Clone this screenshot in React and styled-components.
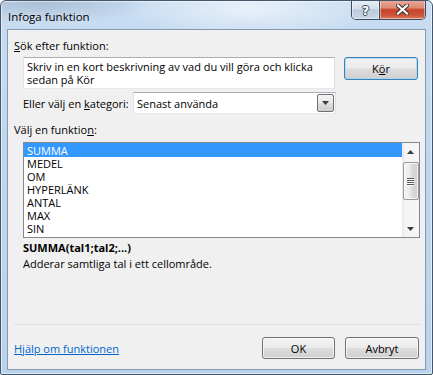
import React from 'react';
import styled, { createGlobalStyle } from 'styled-components';

const FONT = `"Open Sans", "Noto Sans", "Liberation Sans", sans-serif`;

const Global = createGlobalStyle`
  html, body { margin: 0; padding: 0; }
  body { background: #ffffff; font-family: ${FONT}; }
  *, *::before, *::after { box-sizing: border-box; }
`;

const Window = styled.div`
  width: 433px;
  height: 375px;
  border: 1px solid #44566b;
  border-radius: 6px 6px 2px 2px;
  background:
    radial-gradient(ellipse 170px 38px at 250px 8px, rgba(255,255,255,0.6), rgba(255,255,255,0) 75%),
    radial-gradient(ellipse 140px 30px at 40px 0px, rgba(110,130,155,0.35), rgba(110,130,155,0) 80%),
    linear-gradient(180deg, #c8ddf2 0%, #bed6ee 40%, #bad3ec 100%);
  box-shadow: inset 0 0 0 1px rgba(255,255,255,0.55);
  display: flex;
  flex-direction: column;
  padding: 0 6px 4px 6px;
  overflow: hidden;
  font-family: ${FONT};
  font-size: 11px;
  color: #000;
`;

const TitleBar = styled.div`
  height: 28px;
  display: flex;
  align-items: flex-start;
  justify-content: space-between;
`;

const Title = styled.div`
  align-self: center;
  margin-top: 2px;
  padding-left: 1px;
  font-size: 11.5px;
  color: #000;
  text-shadow: 0 0 8px rgba(255,255,255,0.9);
`;

const CaptionButtons = styled.div`
  margin-top: -1px;
  display: flex;
  height: 20px;
  border: 1px solid #3c4c60;
  border-top: none;
  border-radius: 0 0 5px 5px;
  overflow: hidden;
`;

const CaptionButton = styled.div`
  width: ${p => p.$w}px;
  height: 100%;
  display: flex;
  align-items: center;
  justify-content: center;
  background: ${p => p.$close
    ? 'linear-gradient(180deg, #e9ab9d 0%, #dd8b77 40%, #c7432b 52%, #cc5438 80%, #dc7a5c 100%)'
    : 'linear-gradient(180deg, #e9f0f7 0%, #d4dfeb 45%, #bccbdc 52%, #c9d6e5 100%)'};
  box-shadow: inset 0 0 0 1px rgba(255,255,255,0.45);
  & + & { border-left: 1px solid #3c4c60; }
`;

const HelpGlyph = styled.span`
  font-family: "DejaVu Sans", ${FONT};
  font-weight: bold;
  font-size: 13px;
  line-height: 1;
  color: #fff;
  margin-top: 1px;
  text-shadow: -1px 0 #3a4659, 1px 0 #3a4659, 0 -1px #3a4659, 0 1px #3a4659;
`;

const Client = styled.div`
  flex: 1;
  border: 1px solid #8799ae;
  background: #f0f0f0;
  display: flex;
  flex-direction: column;
  padding: 0 6px 10px 6px;
`;

const Label = styled.div`
  margin-top: ${p => p.$top}px;
  padding-left: ${p => p.$indent || 0}px;
  line-height: 15px;
  height: 15px;
  white-space: nowrap;
`;

const Row = styled.div`
  margin-top: ${p => p.$top}px;
  padding-left: 9px;
  display: flex;
  align-items: ${p => p.$align || 'flex-start'};
`;

const TextBox = styled.div`
  width: 312px;
  height: 32px;
  border: 1px solid #abadb3;
  border-color: #abadb3 #dbdfe6 #e3e9ef #e2e3ea;
  background: #fff;
  padding: 2px 3px;
  line-height: 13px;
`;

const Button = styled.div`
  width: ${p => p.$w}px;
  height: ${p => p.$h || 22}px;
  margin-left: ${p => p.$ml || 0}px;
  border: 1px solid ${p => (p.$default ? '#3c7fb1' : '#707070')};
  border-radius: 3px;
  background: linear-gradient(180deg, #f2f2f2 0%, #ebebeb 48%, #dddddd 52%, #cfcfcf 100%);
  box-shadow: inset 0 0 0 1px ${p => (p.$default ? 'rgba(150,220,250,0.7)' : 'rgba(255,255,255,0.7)')};
  display: flex;
  align-items: center;
  justify-content: center;
  line-height: 13px;
`;

const CatLabel = styled.div`
  width: 110px;
  white-space: nowrap;
`;

const Select = styled.div`
  width: 203px;
  height: 22px;
  border: 1px solid #a8a8a8;
  border-color: #abadb3 #dbdfe6 #e3e9ef #e2e3ea;
  background: #fff;
  display: flex;
  align-items: center;
  padding: 1px 1px 1px 3px;
`;

const SelectText = styled.div`
  flex: 1;
`;

const DropButton = styled.div`
  width: 17px;
  height: 18px;
  border: 1px solid #707070;
  border-radius: 2px;
  background: linear-gradient(180deg, #f2f2f2 0%, #ebebeb 48%, #dddddd 52%, #cfcfcf 100%);
  display: flex;
  align-items: center;
  justify-content: center;
`;

const List = styled.div`
  margin-top: 5px;
  margin-left: 9px;
  width: 397px;
  height: 96px;
  border: 1px solid #828790;
  background: #fff;
  display: flex;
`;

const Items = styled.div`
  flex: 1;
  display: flex;
  flex-direction: column;
`;

const Item = styled.div`
  height: 13px;
  line-height: 13px;
  padding-left: 3px;
  background: ${p => (p.$selected ? '#3399ff' : 'transparent')};
  color: ${p => (p.$selected ? '#fff' : '#000')};
  white-space: nowrap;
  &:first-child { height: 14px; padding-top: 1px; }
`;

const ScrollBar = styled.div`
  width: 17px;
  background: linear-gradient(90deg, #e9e9e9 0%, #f5f5f5 20%, #f5f5f5 100%);
  display: flex;
  flex-direction: column;
  align-items: center;
`;

const ScrollArrow = styled.div`
  height: 17px;
  width: 17px;
  display: flex;
  align-items: center;
  justify-content: center;
`;

const Thumb = styled.div`
  margin-top: 2px;
  width: 16px;
  height: 38px;
  border: 1px solid #979797;
  border-radius: 2px;
  background: linear-gradient(90deg, #f3f3f3 0%, #eaeaea 45%, #dadada 55%, #d0d0d0 100%);
  box-shadow: inset 0 0 0 1px rgba(255,255,255,0.7);
  display: flex;
  flex-direction: column;
  align-items: center;
  justify-content: center;
  gap: 1px;
`;

const Grip = styled.div`
  width: 7px;
  height: 1px;
  background: #5a5a5a;
  box-shadow: 0 1px 0 #ffffff;
`;

const Spacer = styled.div`
  flex: 1;
`;

const Signature = styled.div`
  margin-top: 2px;
  padding-left: 9px;
  line-height: 15px;
  font-weight: bold;
`;

const Description = styled.div`
  margin-top: 1px;
  padding-left: 9px;
  line-height: 15px;
`;

const Separator = styled.div`
  width: 406px;
  height: 1px;
  background: #dcdfe3;
`;

const Footer = styled.div`
  margin-top: 12px;
  height: 22px;
  display: flex;
  align-items: center;
`;

const HelpLink = styled.a`
  margin-right: auto;
  color: #0066cc;
  text-decoration: underline;
  cursor: pointer;
`;

const Tri = ({ up }) => (
  <svg width="7" height="4" viewBox="0 0 7 4">
    <path d={up ? 'M0 4 L3.5 0 L7 4 Z' : 'M0 0 L7 0 L3.5 4 Z'} fill="#3c3c3c" />
  </svg>
);

const CloseX = () => (
  <svg width="13" height="11" viewBox="0 0 13 11">
    <path d="M2 1.5 L11 9.5 M11 1.5 L2 9.5" stroke="#3a3030" strokeWidth="4.2" strokeLinecap="square" />
    <path d="M2 1.5 L11 9.5 M11 1.5 L2 9.5" stroke="#ffffff" strokeWidth="2.2" strokeLinecap="square" />
  </svg>
);

const functions = ['SUMMA', 'MEDEL', 'OM', 'HYPERLÄNK', 'ANTAL', 'MAX', 'SIN'];

export default function App() {
  return (
    <>
      <Global />
      <Window>
        <TitleBar>
          <Title>Infoga funktion</Title>
          <CaptionButtons>
            <CaptionButton $w={27}><HelpGlyph>?</HelpGlyph></CaptionButton>
            <CaptionButton $w={46} $close><CloseX /></CaptionButton>
          </CaptionButtons>
        </TitleBar>
        <Client>
          <Label $top={8}><u>S</u>ök efter funktion:</Label>
          <Row $top={4}>
            <TextBox>
              Skriv in en kort beskrivning av vad du vill göra och klicka sedan på Kör
            </TextBox>
            <Button $w={74} $h={23} $ml={9} $default>K<u>ö</u>r</Button>
          </Row>
          <Row $top={3} $align="center">
            <CatLabel>Eller välj en <u>k</u>ategori:</CatLabel>
            <Select>
              <SelectText>Senast använda</SelectText>
              <DropButton><Tri /></DropButton>
            </Select>
          </Row>
          <Label $top={8}>Välj en funktio<u>n</u>:</Label>
          <List>
            <Items>
              {functions.map((f, i) => (
                <Item key={f} $selected={i === 0}>{f}</Item>
              ))}
            </Items>
            <ScrollBar>
              <ScrollArrow><Tri up /></ScrollArrow>
              <Thumb><Grip /><Grip /><Grip /><Grip /></Thumb>
              <Spacer />
              <ScrollArrow><Tri /></ScrollArrow>
            </ScrollBar>
          </List>
          <Signature>SUMMA(tal1;tal2;...)</Signature>
          <Description>Adderar samtliga tal i ett cellområde.</Description>
          <Spacer />
          <Separator />
          <Footer>
            <HelpLink>Hjälp om funktionen</HelpLink>
            <Button $w={73}>OK</Button>
            <Button $w={74} $ml={10}>Avbryt</Button>
          </Footer>
        </Client>
      </Window>
    </>
  );
}
